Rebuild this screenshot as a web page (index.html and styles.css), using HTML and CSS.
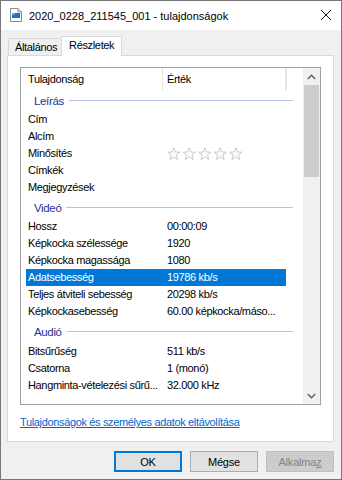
FILE: index.html
```html
<!DOCTYPE html>
<html lang="hu">
  <head>
    <meta charset="UTF-8" />
    <title>2020_0228_211545_001 - tulajdonságok</title>
    <link rel="stylesheet" href="styles.css">
  </head>
  <body>
    <div class="window">
      <!-- title bar -->
      <div class="titlebar">
        <svg class="file-icon" width="12" height="14" viewBox="0 0 12 14">
          <path d="M0.5 0.5 H8 L11.5 4 V13.5 H0.5 Z" fill="#fff" stroke="#8c8c8c" />
          <path d="M8 0.5 V4 H11.5" fill="none" stroke="#8c8c8c" />
          <rect x="2" y="5" width="8" height="5" fill="#1e6fd0" />
          <rect x="2" y="5" width="3" height="2" fill="#5fa8f0" />
        </svg>
        <span class="title">2020_0228_211545_001 - tulajdonságok</span>
        <svg class="close" width="10" height="10" viewBox="0 0 10 10">
          <path d="M0 0 L10 10 M10 0 L0 10" stroke="#111" stroke-width="1" />
        </svg>
      </div>

      <div class="body">
        <!-- tabs -->
        <div class="tabs">
          <div class="tab">Általános</div>
          <div class="tab active">Részletek</div>
        </div>

        <div class="panel">
          <div class="listbox">
            <div class="list">
              <div class="head">
                <div class="hcell first">Tulajdonság</div>
                <div class="hcell second">Érték</div>
                <div class="hcell"></div>
              </div>

              <div class="group first"><span>Leírás</span><i></i></div>
              <div class="row"><span>Cím</span><span></span></div>
              <div class="row"><span>Alcím</span><span></span></div>
              <div class="row">
                <span>Minősítés</span>
                <span class="stars">
                  <svg width="77" height="14" viewBox="0 0 77 14">
                    <defs>
                      <path id="star" d="M6.8 0.8 L8.5 5 L13 5.2 L9.5 8 L10.7 12.6 L6.8 10 L2.9 12.6 L4.1 8 L0.6 5.2 L5.1 5 Z" fill="#fbfbfb" stroke="#c4c4c4" stroke-width="0.9" stroke-linejoin="round" />
                    </defs>
                    <use href="#star" x="0" />
                    <use href="#star" x="15.5" />
                    <use href="#star" x="31" />
                    <use href="#star" x="46.5" />
                    <use href="#star" x="62" />
                  </svg>
                </span>
              </div>
              <div class="row"><span>Címkék</span><span></span></div>
              <div class="row"><span>Megjegyzések</span><span></span></div>

              <div class="group"><span>Videó</span><i></i></div>
              <div class="row"><span>Hossz</span><span>00:00:09</span></div>
              <div class="row"><span>Képkocka szélessége</span><span>1920</span></div>
              <div class="row"><span>Képkocka magassága</span><span>1080</span></div>
              <div class="row selected"><span>Adatsebesség</span><span>19786 kb/s</span></div>
              <div class="row"><span>Teljes átviteli sebesség</span><span>20298 kb/s</span></div>
              <div class="row"><span>Képkockasebesség</span><span>60.00 képkocka/máso...</span></div>

              <div class="group tall"><span>Audió</span><i></i></div>
              <div class="row"><span>Bitsűrűség</span><span>511 kb/s</span></div>
              <div class="row"><span>Csatorna</span><span>1 (monó)</span></div>
              <div class="row"><span>Hangminta-vételezési sűrű...</span><span>32.000 kHz</span></div>

              <div class="group last"><span>Média</span><i></i></div>
            </div>

            <!-- scrollbar -->
            <div class="scrollbar">
              <div class="arrow">
                <svg width="9" height="6" viewBox="0 0 9 6"><path d="M0.8 5 L4.5 1.3 L8.2 5" fill="none" stroke="#606060" stroke-width="1.5" /></svg>
              </div>
              <div class="track">
                <div class="thumb"></div>
              </div>
              <div class="arrow">
                <svg width="9" height="6" viewBox="0 0 9 6"><path d="M0.8 1 L4.5 4.7 L8.2 1" fill="none" stroke="#606060" stroke-width="1.5" /></svg>
              </div>
            </div>
          </div>

          <a class="link" href="#">Tulajdonságok és személyes adatok eltávolítása</a>
        </div>

        <!-- dialog buttons -->
        <div class="buttons">
          <button class="default">OK</button>
          <button>Mégse</button>
          <button disabled>Alkalma<u>z</u></button>
        </div>
      </div>
    </div>
  </body>
</html>
```

FILE: styles.css
```css
body {
  margin: 0;
  font-family: "Liberation Sans", Arial, sans-serif;
  font-size: 11px;
  letter-spacing: -0.35px;
  color: #000;
}
.window {
  width: 342px;
  height: 480px;
  box-sizing: border-box;
  border: 1px solid #767676;
  display: flex;
  flex-direction: column;
  background: #f0f0f0;
}
.titlebar {
  height: 29px;
  background: #fff;
  display: flex;
  align-items: center;
  padding-left: 9px;
  padding-right: 10px;
}
.file-icon {
  margin-top: -1px;
}
.title {
  margin-left: 7px;
  flex: 1;
  font-size: 11px;
  letter-spacing: 0;
}
.close {
  margin-top: -1px;
}
.body {
  flex: 1;
  padding: 6px 7px 0 6px;
  display: flex;
  flex-direction: column;
}
.tabs {
  display: flex;
  align-items: flex-end;
  height: 19px;
  padding-left: 1px;
  position: relative;
  z-index: 1;
}
.tab {
  height: 17px;
  line-height: 17px;
  padding: 0 4px 0 6px;
  border: 1px solid #d9d9d9;
  border-bottom: none;
  background: #f0f0f0;
  box-sizing: border-box;
}
.tab.active {
  height: 20px;
  line-height: 17px;
  background: #fff;
  margin-bottom: -1px;
  padding: 0 7px;
  margin-left: -1px;
}
.panel {
  height: 387px;
  box-sizing: border-box;
  background: #fff;
  border: 1px solid #d9d9d9;
  padding: 11px 12px 0 12px;
  display: flex;
  flex-direction: column;
}
.listbox {
  height: 338px;
  box-sizing: border-box;
  border: 1px solid #a0a0a0;
  display: flex;
  overflow: hidden;
}
.list {
  flex: 1;
  overflow: hidden;
}
.head {
  display: flex;
  height: 22px;
  align-items: stretch;
}
.hcell {
  line-height: 22px;
  border-right: 1px solid #e5e5e5;
  box-sizing: border-box;
}
.hcell.first {
  width: 142px;
  padding-left: 7px;
}
.hcell.second {
  width: 123px;
  padding-left: 4px;
}
.group {
  height: 22px;
  display: flex;
  align-items: center;
  padding-left: 13px;
  margin-right: 10px;
  color: #1e3296;
  font-size: 11.5px;
}
.group.first {
  height: 21px;
}
.group.tall {
  height: 23px;
}
.group.last {
  padding-top: 3px;
}
.group span {
  padding-top: 1px;
}
.group i {
  flex: 1;
  height: 1px;
  background: #b3c3e8;
  margin-left: 5px;
}
.row {
  display: grid;
  grid-template-columns: 139px 1fr;
  height: 17px;
  line-height: 17px;
  margin-left: 5px;
  width: 260px;
  padding-left: 2px;
  box-sizing: border-box;
  white-space: nowrap;
  overflow: hidden;
}
.row span {
  overflow: hidden;
}
.row.selected {
  background: #0078d7;
  color: #fff;
}
.stars {
  display: flex;
  align-items: center;
}
.scrollbar {
  width: 17px;
  background: #f0f0f0;
  display: flex;
  flex-direction: column;
}
.arrow {
  height: 17px;
  display: flex;
  align-items: center;
  justify-content: center;
}
.track {
  flex: 1;
}
.thumb {
  height: 92px;
  margin: 0 1px;
  background: #cdcdcd;
}
.link {
  margin-top: 11px;
  color: #0066cc;
  text-decoration: underline;
}
.buttons {
  display: flex;
  justify-content: flex-end;
  gap: 8px;
  padding-top: 9px;
}
button {
  width: 68px;
  height: 21px;
  font-family: inherit;
  font-size: 11px;
  letter-spacing: -0.2px;
  background: #e1e1e1;
  border: 1px solid #adadad;
  color: #000;
  padding: 0;
}
button.default {
  border: 2px solid #0078d7;
}
button:disabled {
  background: #cccccc;
  border-color: #bfbfbf;
  color: #838383;
}
```
